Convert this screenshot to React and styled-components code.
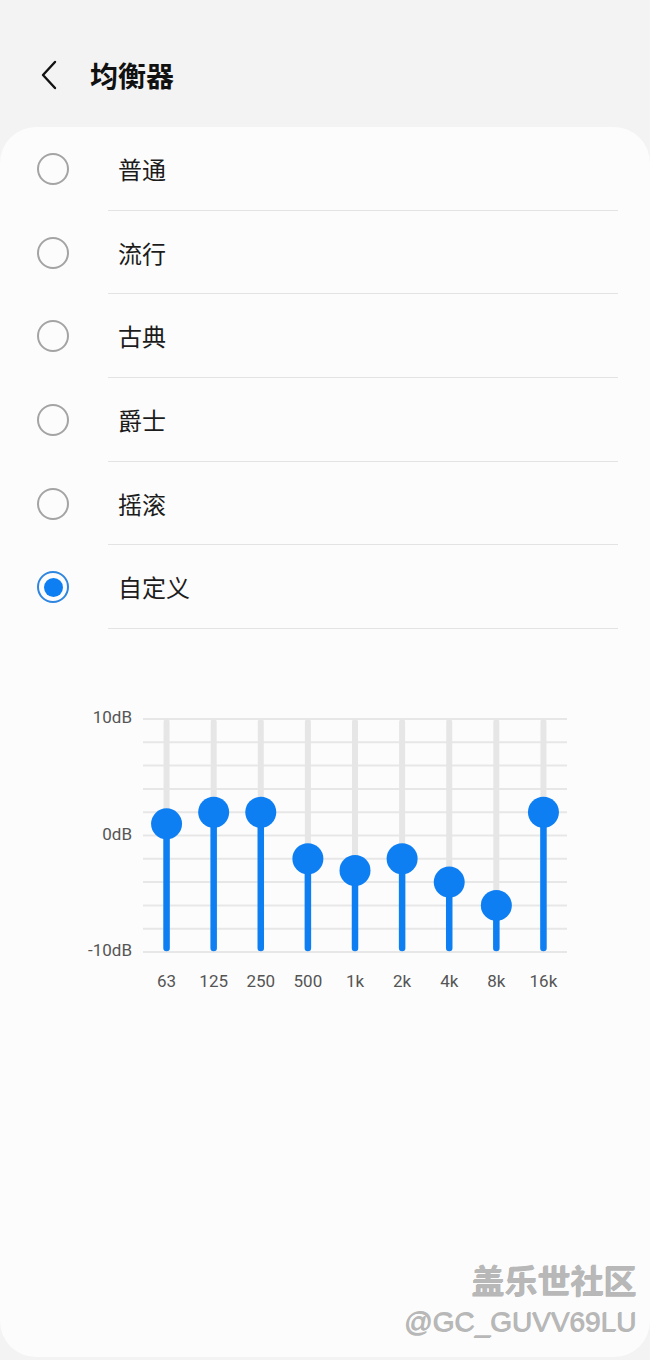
import React from 'react';
import styled, { createGlobalStyle } from 'styled-components';

const GlobalStyle = createGlobalStyle`
   html, body {
      margin: 0;
      padding: 0;
      background: #f3f3f3;
   }
   body {
      font-family: Roboto, "Noto Sans CJK SC", sans-serif;
   }
`;

const BLUE = '#0d7ff3';

const Screen = styled.div`
   position: relative;
   width: 650px;
   height: 1360px;
   overflow: hidden;
   background: #f3f3f3;
`;

const Header = styled.header`
   display: flex;
   align-items: center;
   height: 127px;
   padding: 23px 0 0 38px;
   box-sizing: border-box;
   gap: 30px;
`;

const BackButton = styled.button`
   display: flex;
   align-items: center;
   justify-content: center;
   width: 22px;
   height: 32px;
   padding: 0;
   border: none;
   background: none;
`;

const Title = styled.h1`
   margin: 0;
   font-family: "Noto Sans CJK SC", sans-serif;
   font-size: 28px;
   font-weight: 700;
   color: #111;
   letter-spacing: 0;
`;

const Card = styled.main`
   height: 1230px;
   background: #fcfcfc;
   border-radius: 36px;
`;

const List = styled.ul`
   list-style: none;
   margin: 0;
   padding: 0;
`;

const Row = styled.li`
   display: flex;
   align-items: stretch;
   height: 83.7px;
`;

const RadioCell = styled.div`
   display: flex;
   align-items: center;
   width: 108px;
   padding-left: 37px;
   box-sizing: border-box;
`;

const Radio = styled.span`
   display: flex;
   align-items: center;
   justify-content: center;
   width: 32px;
   height: 32px;
   box-sizing: border-box;
   border-radius: 50%;
   border: 2px solid ${(p) => (p.checked ? '#2f86e0' : '#a4a4a4')};
   &::after {
      content: '';
      display: ${(p) => (p.checked ? 'block' : 'none')};
      width: 19px;
      height: 19px;
      border-radius: 50%;
      background: ${BLUE};
   }
`;

const Label = styled.div`
   flex: 1;
   display: flex;
   align-items: center;
   margin-right: 32px;
   padding-left: 10px;
   border-bottom: 1px solid #e3e3e3;
   font-family: "Noto Sans CJK SC", sans-serif;
   font-size: 24px;
   color: #1c1c1c;
`;

const ChartSection = styled.section`
   display: flex;
   flex-direction: column;
   padding: 90px 0 0 80px;
`;

const ChartBody = styled.div`
   display: flex;
   gap: 11px;
`;

const Axis = styled.div`
   display: flex;
   flex-direction: column;
   justify-content: space-between;
   align-items: flex-end;
   width: 52px;
   height: 251px;
   margin-top: -11px;
   font-size: 17px;
   line-height: 18px;
   color: #555;
`;

const Plot = styled.svg`
   display: block;
   overflow: visible;
`;

const FreqRow = styled.div`
   display: grid;
   grid-template-columns: repeat(9, 47.11px);
   margin: 11px 0 0 63px;
   font-size: 17px;
   line-height: 22px;
   color: #555;
`;

const Freq = styled.span`
   text-align: center;
`;

const Watermark = styled.div`
   position: absolute;
   right: 13px;
   bottom: 20px;
   display: flex;
   flex-direction: column;
   align-items: flex-end;
   color: #b8b8b8;
   text-shadow: -1px 1px 0 rgba(70, 70, 70, 0.4);
`;

const MarkTitle = styled.span`
   font-family: "Noto Sans CJK SC", sans-serif;
   font-size: 33px;
   font-weight: 700;
   line-height: 40px;
   letter-spacing: 0;
`;

const MarkUser = styled.span`
   font-family: "Liberation Sans", sans-serif;
   font-size: 28px;
   font-weight: 400;
   line-height: 36px;
   margin-top: 5px;
`;

const presets = ['普通', '流行', '古典', '爵士', '摇滚', '自定义'];

const bands = [
   { f: '63', db: 1 },
   { f: '125', db: 2 },
   { f: '250', db: 2 },
   { f: '500', db: -2 },
   { f: '1k', db: -3 },
   { f: '2k', db: -2 },
   { f: '4k', db: -4 },
   { f: '8k', db: -6 },
   { f: '16k', db: 2 }
];

const W = 424;
const H = 233;
const STEP = H / 10;
const COL = W / 9;

const dbToY = (db) => ((10 - db) / 20) * H;

const EqPlot = () => (
   <Plot width={W} height={H} viewBox={`0 0 ${W} ${H}`}>
      {Array.from({ length: 11 }).map((_, i) => (
         <line key={i} x1="0" x2={W} y1={i * STEP} y2={i * STEP} stroke="#e7e7e7" strokeWidth="2" />
      ))}
      {bands.map((b, i) => {
         const x = COL * i + COL / 2;
         const y = dbToY(b.db);
         return (
            <g key={b.f}>
               <line x1={x} x2={x} y1="3" y2={H - 3} stroke="#e6e6e6" strokeWidth="6" strokeLinecap="round" />
               <line x1={x} x2={x} y1={y} y2={H - 4} stroke={BLUE} strokeWidth="6.5" strokeLinecap="round" />
               <circle cx={x} cy={y} r="15.5" fill={BLUE} />
            </g>
         );
      })}
   </Plot>
);

const App = () => (
   <Screen>
      <GlobalStyle />
      <Header>
         <BackButton aria-label="back">
            <svg width="18" height="30" viewBox="0 0 18 30">
               <polyline points="15,2 3,15 15,28" fill="none" stroke="#111" strokeWidth="2.4" strokeLinecap="round" strokeLinejoin="round" />
            </svg>
         </BackButton>
         <Title>均衡器</Title>
      </Header>
      <Card>
         <List>
            {presets.map((p) => (
               <Row key={p}>
                  <RadioCell>
                     <Radio checked={p === '自定义'} />
                  </RadioCell>
                  <Label>{p}</Label>
               </Row>
            ))}
         </List>
         <ChartSection>
            <ChartBody>
               <Axis>
                  <span>10dB</span>
                  <span>0dB</span>
                  <span>-10dB</span>
               </Axis>
               <EqPlot />
            </ChartBody>
            <FreqRow>
               {bands.map((b) => (
                  <Freq key={b.f}>{b.f}</Freq>
               ))}
            </FreqRow>
         </ChartSection>
      </Card>
      <Watermark>
         <MarkTitle>盖乐世社区</MarkTitle>
         <MarkUser>@GC_GUVV69LU</MarkUser>
      </Watermark>
   </Screen>
);

export default App;
